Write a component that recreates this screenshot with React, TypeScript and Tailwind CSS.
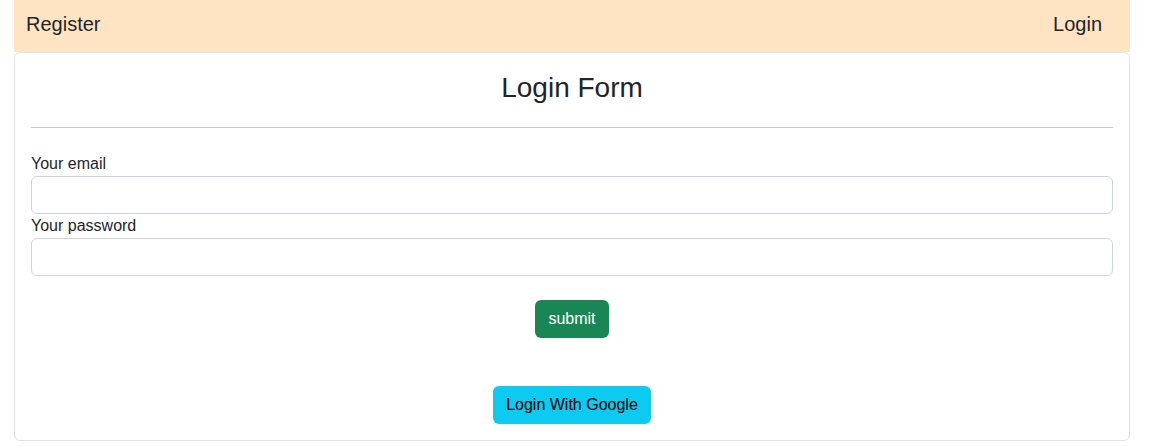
import React from 'react';

export default function App() {
  return (
    <div className="w-[1116px] ml-[14px] text-[#212529] font-['Liberation_Sans',Arial,sans-serif]">
      <nav className="h-[52px] bg-[#ffe4c4] flex items-center justify-between pl-[12px] pr-[28px] pb-[4px] text-[20px]">
        <span>Register</span>
        <span>Login</span>
      </nav>
      <div className="border border-[#dee2e6] rounded-md px-[16px] pt-[18px] pb-[16px]">
        <h2 className="text-[28px] leading-[1.2] text-center">Login Form</h2>
        <hr className="mt-[22px] mb-[16px] border-0 border-t border-[#c8c8c8]" />
        <form className="pt-[8px] flex flex-col" onSubmit={(e) => e.preventDefault()}>
          <label className="text-[16px] leading-[24px]">Your email</label>
          <input type="email" className="h-[38px] border border-[#ced4da] rounded-md px-3 outline-none" />
          <label className="text-[16px] leading-[24px]">Your password</label>
          <input type="password" className="h-[38px] border border-[#ced4da] rounded-md px-3 outline-none" />
          <div className="flex justify-center mt-[24px]">
            <button className="h-[38px] px-[13px] bg-[#198754] text-white text-[16px] rounded-md">submit</button>
          </div>
        </form>
        <div className="flex justify-center mt-[48px]">
          <button className="h-[38px] px-[13px] bg-[#0dcaf0] text-black text-[16px] rounded-md">Login With Google</button>
        </div>
      </div>
    </div>
  );
}
